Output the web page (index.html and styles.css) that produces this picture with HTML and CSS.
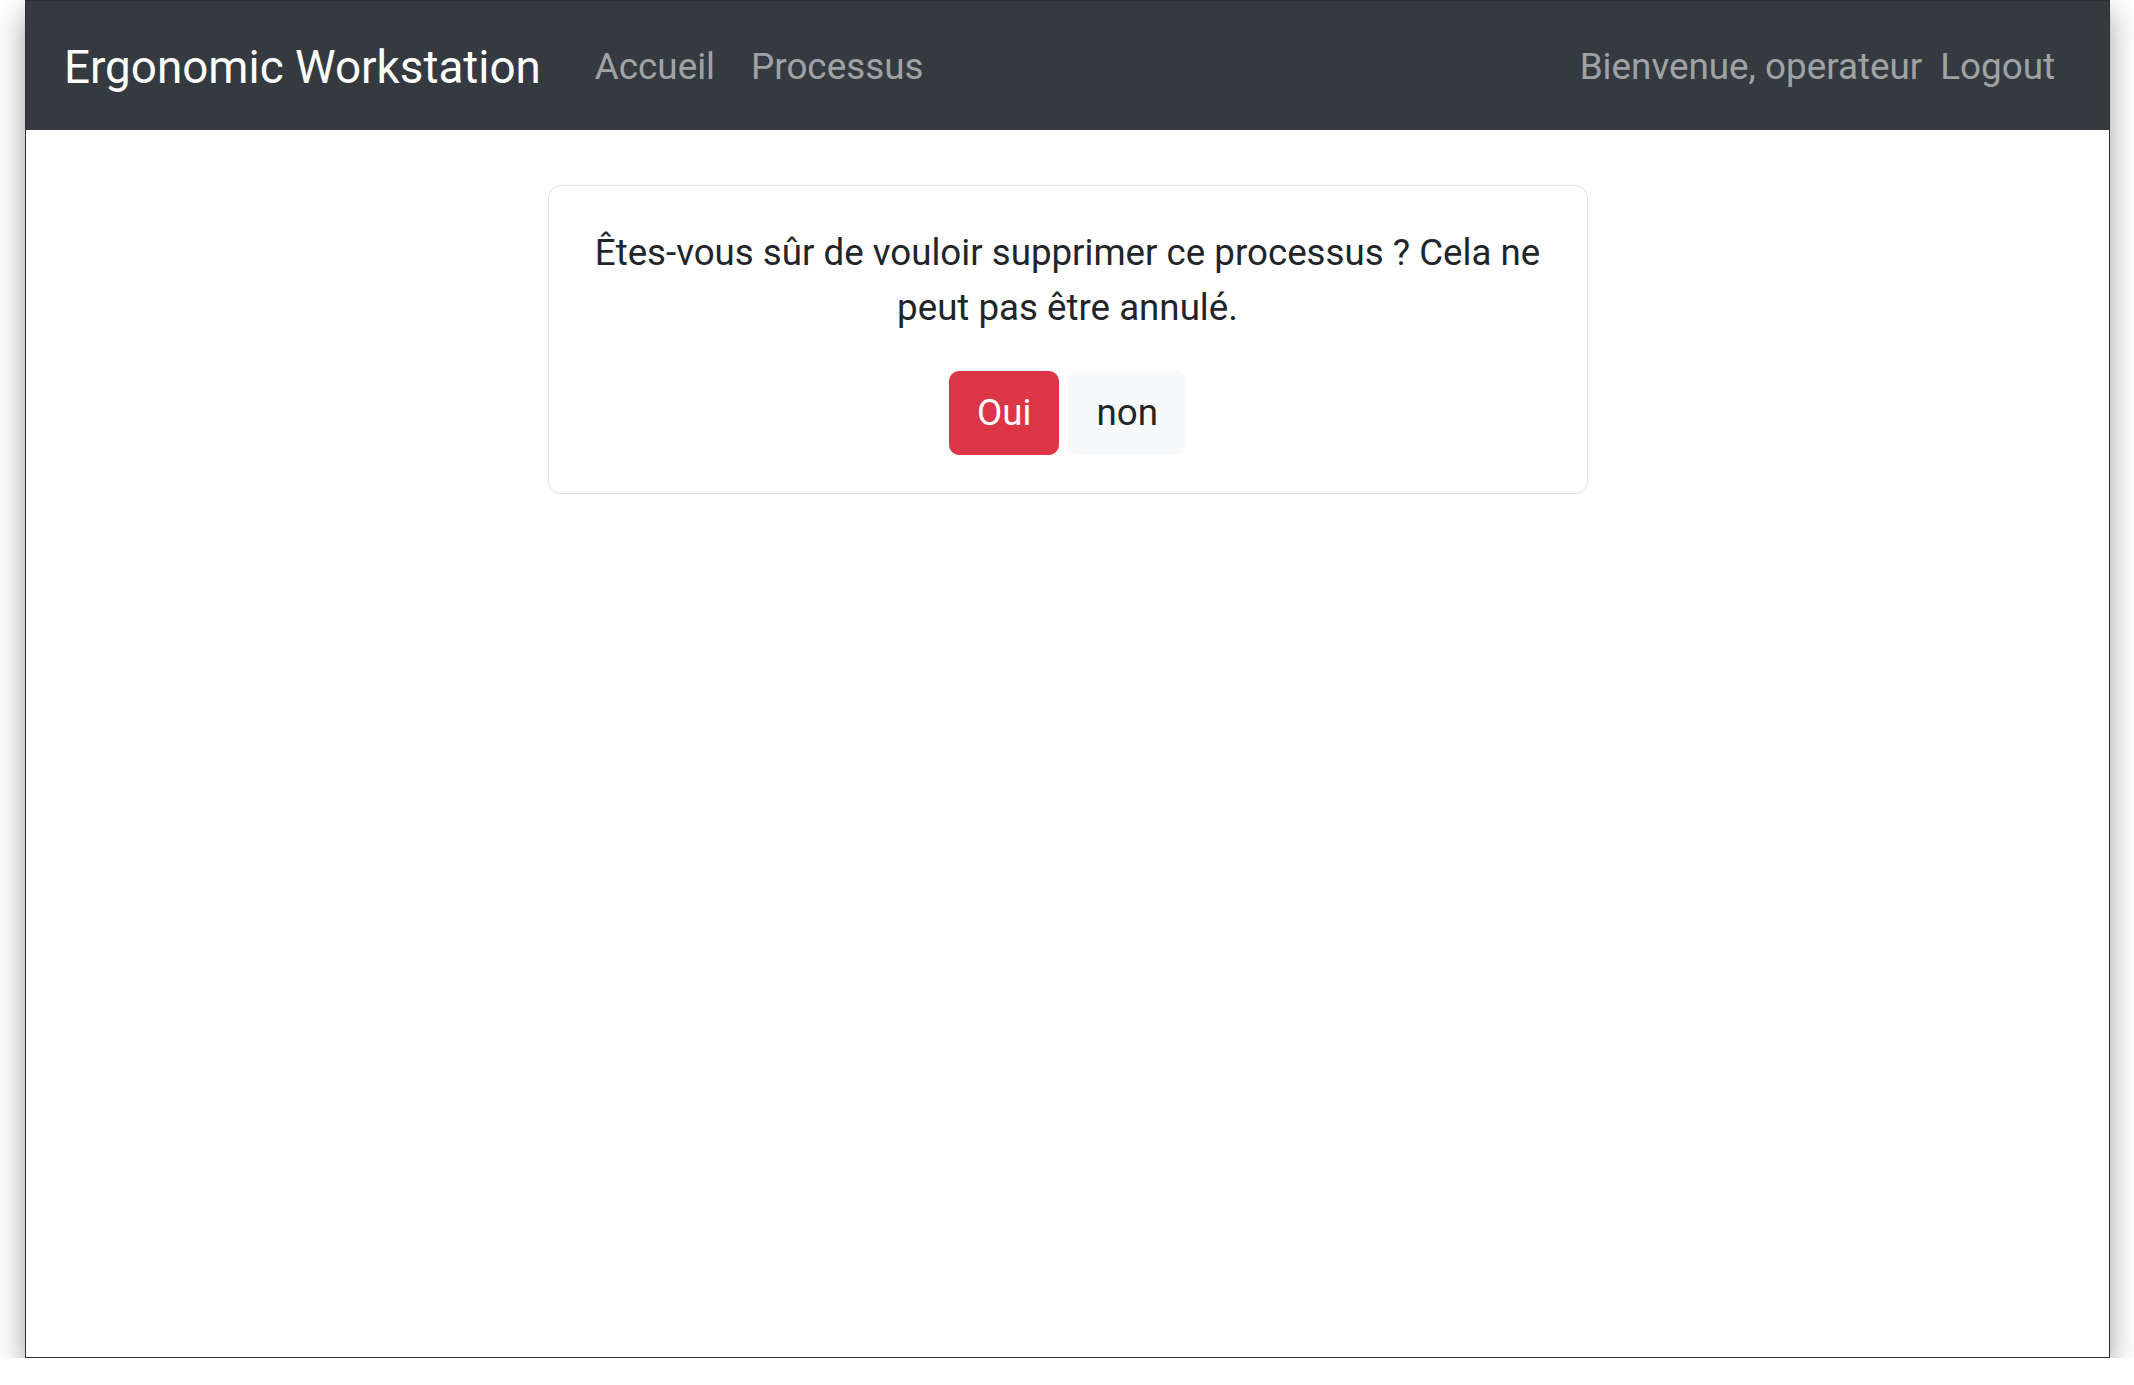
FILE: index.html
```html
<!DOCTYPE html>
<html lang="fr">
<head>
<meta charset="utf-8">
<title>Ergonomic Workstation</title>
<link rel="stylesheet" href="styles.css">
</head>
<body>
<div class="frame">
  <nav class="navbar">
    <a class="brand" href="#">Ergonomic Workstation</a>
    <ul class="nav">
      <li><a class="nav-link" href="#">Accueil</a></li>
      <li><a class="nav-link" href="#">Processus</a></li>
    </ul>
    <div class="nav-right">
      <span class="nav-text">Bienvenue, operateur</span>
      <a class="nav-link" href="#">Logout</a>
    </div>
  </nav>
  <main class="content">
    <div class="card">
      <p class="message">Êtes-vous sûr de vouloir supprimer ce processus ? Cela ne peut pas être annulé.</p>
      <div class="actions">
        <button class="btn btn-danger" type="button">Oui</button>
        <button class="btn btn-light" type="button">non</button>
      </div>
    </div>
  </main>
</div>
</body>
</html>
```

FILE: styles.css
```css
* { box-sizing: border-box; }

html, body {
  margin: 0;
  padding: 0;
  background: #ffffff;
}

body {
  font-family: Roboto, "Liberation Sans", Arial, sans-serif;
  color: #212529;
}

.frame {
  width: 2085px;
  height: 1358px;
  margin-left: 25px;
  border: 1px solid #2e2e2e;
  background: #ffffff;
  box-shadow: 0 12px 28px rgba(0, 0, 0, 0.38);
  overflow: hidden;
}

.navbar {
  height: 129px;
  background: #343a40;
  display: flex;
  align-items: center;
  padding: 2px 36px 0 36px;
}

.brand {
  font-size: 45.8px;
  line-height: 67px;
  color: #ffffff;
  text-decoration: none;
  margin-right: 36px;
  padding-left: 2px;
  margin-top: 1px;
}

.nav {
  display: flex;
  list-style: none;
  margin: 0;
  padding: 0;
}

.nav-link {
  display: block;
  font-size: 36.8px;
  line-height: 54px;
  padding: 0 18px;
  color: rgba(255, 255, 255, 0.55);
  text-decoration: none;
}

.nav-right {
  margin-left: auto;
  display: flex;
  align-items: center;
}

.nav-text {
  font-size: 36.8px;
  line-height: 54px;
  color: rgba(255, 255, 255, 0.55);
}

.content {
  padding-top: 55px;
}

.card {
  width: 1040px;
  margin: 0 auto;
  border: 1px solid #dfdfdf;
  border-radius: 13px;
  padding: 39px 36px 38px;
  text-align: center;
}

.message {
  font-size: 36.7px;
  line-height: 55px;
  margin: 0 0 35.5px;
}

.actions {
  display: flex;
  justify-content: center;
  gap: 9px;
}

.btn {
  font-family: inherit;
  font-size: 36.7px;
  line-height: 55px;
  padding: 13.5px 27px;
  border: 1.5px solid transparent;
  border-radius: 10px;
  cursor: pointer;
}

.btn-danger {
  background: #dc3545;
  border-color: #dc3545;
  color: #ffffff;
}

.btn-light {
  background: #f8f9fa;
  border-color: #f8f9fa;
  color: #212529;
}
```
